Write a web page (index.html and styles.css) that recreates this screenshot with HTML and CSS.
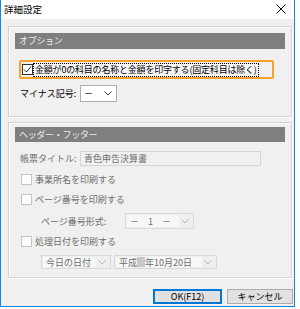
FILE: index.html
```html
<!DOCTYPE html>
<html lang="ja">
<head>
    <meta charset="UTF-8">
    <meta name="viewport" content="width=device-width, initial-scale=1.0">
    <title>詳細設定</title>
    <link rel="stylesheet" href="styles.css">
</head>
<body>
    <div class="window">
        <div class="titlebar">
            <span class="title">詳細設定</span>
            <svg class="close" width="10" height="10" viewBox="0 0 10 10">
                <path d="M0.5 0.5 L9.5 9.5 M9.5 0.5 L0.5 9.5" stroke="#000" stroke-width="1" fill="none"/>
            </svg>
        </div>

        <div class="content">
            <div class="group group-option">
                <div class="group-head">オプション</div>

                <div class="check-focus">
                    <span class="cb">
                        <svg width="9" height="9" viewBox="0 0 9 9">
                            <path d="M1 4.5 L3.5 7 L8 1.5" stroke="#222" stroke-width="1" fill="none"/>
                        </svg>
                    </span>
                    <span class="focus-text">金額が0の科目の名称と金額を印字する(固定科目は除く)</span>
                </div>

                <div class="row row-minus">
                    <span class="label">マイナス記号:</span>
                    <span class="combo combo-minus">
                        <span class="combo-value">－</span>
                        <svg class="chev" width="8" height="5" viewBox="0 0 8 5">
                            <path d="M0.5 0.5 L4 4 L7.5 0.5" stroke="#333" fill="none"/>
                        </svg>
                    </span>
                </div>
            </div>

            <div class="group group-header">
                <div class="group-head">ヘッダー・フッター</div>

                <div class="row row-title">
                    <span class="label off">帳票タイトル:</span>
                    <span class="textbox">青色申告決算書</span>
                </div>

                <div class="check-row row-cb1">
                    <span class="cb off"></span>
                    <span class="off">事業所名を印刷する</span>
                </div>

                <div class="check-row row-cb2">
                    <span class="cb off"></span>
                    <span class="off">ページ番号を印刷する</span>
                </div>

                <div class="row row-page">
                    <span class="label-page off">ページ番号形式:</span>
                    <span class="combo combo-off combo-page">
                        <span class="combo-value">－　1　－</span>
                        <svg class="chev" width="8" height="5" viewBox="0 0 8 5">
                            <path d="M0.5 0.5 L4 4 L7.5 0.5" stroke="#b5b5b5" fill="none"/>
                        </svg>
                    </span>
                </div>

                <div class="check-row row-cb3">
                    <span class="cb off"></span>
                    <span class="off">処理日付を印刷する</span>
                </div>

                <div class="row row-date">
                    <span class="combo combo-off combo-today">
                        <span class="combo-value">今日の日付</span>
                        <svg class="chev" width="8" height="5" viewBox="0 0 8 5">
                            <path d="M0.5 0.5 L4 4 L7.5 0.5" stroke="#b5b5b5" fill="none"/>
                        </svg>
                    </span>
                    <span class="combo combo-off combo-era">
                        <span class="combo-value">平成<span class="mask"></span>年10月20日</span>
                        <svg class="chev" width="8" height="5" viewBox="0 0 8 5">
                            <path d="M0.5 0.5 L4 4 L7.5 0.5" stroke="#b5b5b5" fill="none"/>
                        </svg>
                    </span>
                </div>
            </div>

            <div class="buttons">
                <span class="btn btn-ok">OK(F12)</span>
                <span class="btn btn-cancel">キャンセル</span>
            </div>
        </div>
    </div>
</body>
</html>
```

FILE: styles.css
```css
body {
    margin: 0;
    background: #fff;
    font-family: "Noto Sans CJK JP", "Noto Sans", sans-serif;
    font-size: 9px;
    color: #000;
}

.window {
    width: 293px;
    height: 306px;
    border: 1px solid #1883d7;
    border-top: none;
    background: #f0f0f0;
    display: flex;
    flex-direction: column;
}

.titlebar {
    height: 21px;
    background: #fff;
    display: flex;
    align-items: center;
    justify-content: space-between;
    padding: 0 8px 0 3px;
}

.title {
    font-size: 9.5px;
    margin-top: -1px;
}

.close {
    margin-top: -2px;
}

.content {
    display: flex;
    flex-direction: column;
    padding: 7px 2px 2px 7px;
}

/* group boxes */
.group {
    border: 1px solid #d3d3d3;
    box-shadow: inset 1px 1px 0 #fff, 1px 1px 0 #fff;
    padding: 6px 6px 0 6px;
    display: flex;
    flex-direction: column;
}

.group-option {
    height: 83px;
}

.group-header {
    margin-top: 5px;
    padding-top: 4px;
    height: 150px;
}

.group-head {
    background: #7f7f7f;
    color: #ececec;
    height: 16px;
    line-height: 16px;
    padding-left: 4px;
    letter-spacing: -0.3px;
}

.group-header .group-head {
    height: 15px;
    line-height: 15px;
}

.row {
    display: flex;
    align-items: center;
}

.label {
    width: 60px;
    margin-left: 5px;
}

.off {
    color: #6d6d6d;
}

/* checkbox with focus */
.check-focus {
    margin: 11px 0 0 4px;
    width: 250px;
    height: 15px;
    border: 2px solid #f6a12d;
    border-radius: 2px;
    display: flex;
    align-items: center;
    padding-left: 1px;
}

.cb {
    width: 9px;
    height: 9px;
    border: 1px solid #333;
    background: #fff;
    display: flex;
    align-items: center;
    justify-content: center;
    flex-shrink: 0;
}

.cb.off {
    border-color: #c5c5c5;
    background: #fcfcfc;
}

.focus-text {
    margin-left: 1px;
    outline: 1px dotted #000;
    background: #f8f8f8;
    height: 12px;
    line-height: 12px;
    padding: 0 1px;
    letter-spacing: -0.2px;
}

.check-row {
    display: flex;
    align-items: center;
    height: 13px;
    margin-left: 6px;
}

.check-row .cb {
    margin-right: 3px;
}

/* combos */
.combo {
    display: flex;
    align-items: center;
    border: 1px solid #adadad;
    background: #fff;
    box-sizing: border-box;
}

.combo-value {
    flex: 1;
    padding-left: 3px;
    display: flex;
    align-items: center;
    height: 100%;
}

.chev {
    margin: 0 4px 0 2px;
}

.combo-minus {
    width: 37px;
    height: 17px;
}

.row-minus {
    margin-top: 6px;
}

.combo-off {
    border-color: #d9d9d9;
    background: #efefef;
    color: #6d6d6d;
}

.combo-off .combo-value {
    background: #f7f7f7;
    margin: 1px 0 1px 1px;
    height: auto;
    align-self: stretch;
}

/* header group rows */
.row-title {
    margin-top: 9px;
}

.textbox {
    width: 181px;
    height: 15px;
    box-sizing: border-box;
    border: 1px solid #d5d5d5;
    background: #f0f0f0;
    color: #6d6d6d;
    padding-left: 3px;
    line-height: 13px;
}

.row-cb1 {
    margin-top: 7px;
}

.row-cb2 {
    margin-top: 7px;
}

.row-page {
    margin-top: 7px;
}

.label-page {
    width: 84px;
    margin-left: 26px;
}

.combo-page {
    width: 69px;
    height: 16px;
}

.row-cb3 {
    margin-top: 6px;
}

.row-date {
    margin: 7px 0 0 26px;
    gap: 3px;
}

.combo-today {
    width: 70px;
    height: 14px;
}

.combo-era {
    width: 103px;
    height: 14px;
}

.mask {
    display: inline-block;
    width: 8px;
    height: 10px;
    background: #c8c8c8;
}

/* buttons */
.buttons {
    display: flex;
    justify-content: flex-end;
    gap: 5px;
    margin: 11px -1px 0 0;
}

.btn {
    height: 15px;
    box-sizing: border-box;
    background: #e1e1e1;
    border: 1px solid #adadad;
    display: flex;
    align-items: center;
    justify-content: center;
}

.btn-ok {
    width: 69px;
    border-color: #0078d7;
    box-shadow: inset 0 0 0 1px #0078d7;
}

.btn-cancel {
    width: 66px;
}
```
